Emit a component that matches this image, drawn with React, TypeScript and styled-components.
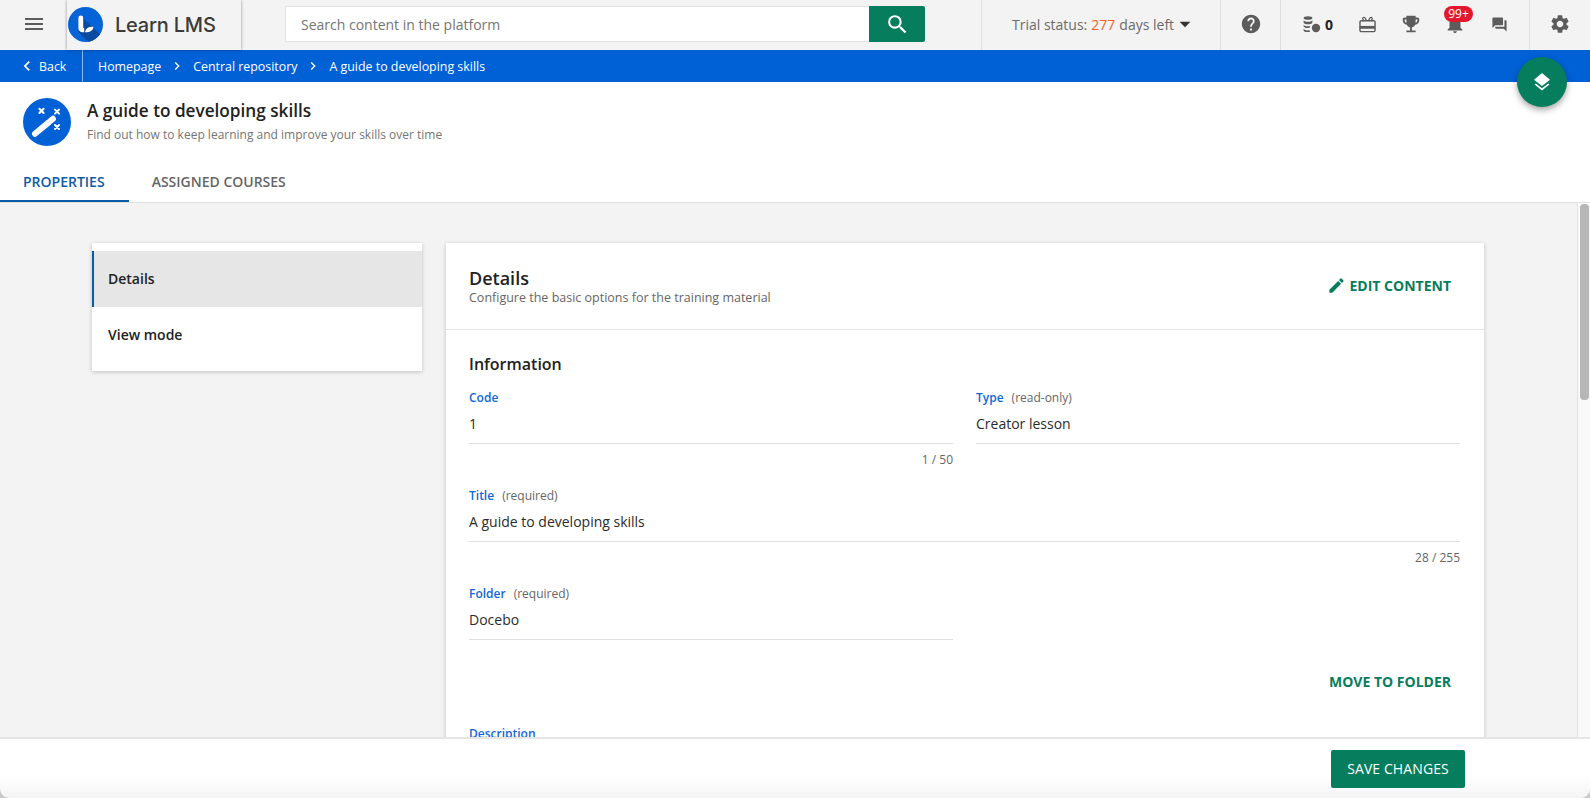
import React from "react";
import styled, { createGlobalStyle } from "styled-components";
import {
  MdMenu,
  MdSearch,
  MdHelp,
  MdEmojiEvents,
  MdNotifications,
  MdForum,
  MdSettings,
  MdEdit,
  MdChevronLeft,
  MdChevronRight,
  MdArrowDropDown,
} from "react-icons/md";

const GREEN = "#067d5d";
const BLUE = "#0060d6";
const DARK_BLUE = "#0a5ca8";
const ICON = "#5c5c5c";

const Global = createGlobalStyle`
  html, body { margin: 0; padding: 0; height: 100%; overflow: hidden; }
  #root { height: 100%; }
  * { box-sizing: border-box; }
  body { font-family: "Open Sans", "Liberation Sans", sans-serif; color: #222; background: #c9c9c9; }
`;

const Page = styled.div`
  position: relative;
  height: 798px;
  display: flex;
  flex-direction: column;
`;

const TopBar = styled.header`
  height: 50px;
  flex: none;
  display: flex;
  align-items: stretch;
  background: #f3f3f3;
`;

const MenuCell = styled.div`
  width: 67px;
  display: flex;
  align-items: center;
  justify-content: center;
  color: ${ICON};
  font-size: 24px;
  padding-bottom: 2px;
`;

const LogoBox = styled.div`
  width: 174px;
  display: flex;
  align-items: center;
  gap: 12px;
  padding: 0 0 1px 1px;
  position: relative;
  z-index: 3;
  background: #f3f3f3;
  box-shadow: 0 0 3px rgba(0, 0, 0, 0.4);
`;

const LogoWord = styled.span`
  font-family: Inter, "Open Sans", sans-serif;
  font-size: 20px;
  font-weight: 500;
  letter-spacing: -0.2px;
  color: #3b3b3b;
`;

const SearchForm = styled.div`
  margin: 6px 0 8px 44px;
  width: 640px;
  display: flex;
`;

const SearchField = styled.div`
  flex: 1;
  background: #fff;
  border: 1px solid #e2e2e2;
  border-right: 0;
  border-radius: 2px 0 0 2px;
  padding-left: 15px;
  display: flex;
  align-items: center;
  font-size: 14px;
  color: #757575;
`;

const SearchButton = styled.div`
  width: 56px;
  background: ${GREEN};
  border-radius: 0 2px 2px 0;
  color: #fff;
  display: flex;
  align-items: center;
  justify-content: center;
  font-size: 25px;
`;

const TopCell = styled.div<{ $w: number; $start?: number }>`
  width: ${(p) => p.$w}px;
  margin-left: ${(p) => p.$start ?? 0}px;
  border-left: 1px solid #e0e0e0;
  display: flex;
  align-items: center;
  color: ${ICON};
  flex: none;
`;

const TrialCell = styled(TopCell)`
  padding-left: 30px;
  font-size: 14px;
  color: #6b6b6b;
  padding-bottom: 2px;
`;

const Orange = styled.span`
  color: #f0622c;
  margin: 0 4px;
`;

const Caret = styled.span`
  color: #333;
  display: flex;
  font-size: 26px;
  margin-left: -2px;
`;

const IconCell = styled.div<{ $w?: number; $size?: number }>`
  position: relative;
  width: ${(p) => p.$w ?? 44}px;
  height: 100%;
  flex: none;
  display: flex;
  align-items: center;
  justify-content: center;
  font-size: ${(p) => p.$size ?? 22}px;
  color: ${ICON};
  padding-bottom: 2px;
`;

const CoinCell = styled(IconCell)`
  justify-content: flex-start;
  padding-left: 22px;
  gap: 4px;
`;

const CoinCount = styled.span`
  font-size: 14px;
  font-weight: 700;
  color: #222;
`;

const Badge = styled.span`
  position: absolute;
  left: 11px;
  top: 6px;
  width: 29px;
  height: 16px;
  border-radius: 8px;
  background: #e4182c;
  color: #fff;
  font-size: 12px;
  line-height: 16px;
  text-align: center;
`;

const CrumbBar = styled.nav`
  height: 32px;
  flex: none;
  display: flex;
  align-items: center;
  background: ${BLUE};
  color: #fff;
  font-size: 12.4px;
`;

const BackLink = styled.div`
  width: 83px;
  height: 100%;
  padding-left: 17px;
  border-right: 1px solid rgba(255, 255, 255, 0.55);
  display: flex;
  align-items: center;
  gap: 2px;
`;

const CrumbIcon = styled.span<{ $size: number }>`
  display: flex;
  font-size: ${(p) => p.$size}px;
`;

const Crumbs = styled.div`
  display: flex;
  align-items: center;
  padding-left: 15px;
  gap: 8px;
`;

const PageHead = styled.div`
  height: 70px;
  flex: none;
  background: #fff;
  padding: 16px 0 0 23px;
  display: flex;
  gap: 16px;
`;

const HeadText = styled.div`
  display: flex;
  flex-direction: column;
`;

const PageTitle = styled.h1`
  margin: 1px 0 1px;
  font-size: 17.2px;
  line-height: 24px;
  font-weight: 600;
  color: #222;
`;

const PageSub = styled.p`
  margin: 0;
  font-size: 12px;
  line-height: 22px;
  color: #757575;
`;

const Tabs = styled.div`
  height: 51px;
  flex: none;
  background: #fff;
  display: flex;
  border-bottom: 1px solid #e0e0e0;
`;

const Tab = styled.div<{ $active?: boolean }>`
  height: 50px;
  padding: 10px 24px 0 23px;
  display: flex;
  align-items: center;
  font-size: 14px;
  font-weight: 600;
  color: ${(p) => (p.$active ? DARK_BLUE : "#666")};
  border-bottom: 2px solid ${(p) => (p.$active ? DARK_BLUE : "transparent")};
`;

const Body = styled.div`
  flex: 1;
  min-height: 0;
  display: flex;
  background: #f3f3f3;
`;

const Scroller = styled.main`
  flex: 1;
  min-width: 0;
  overflow: hidden;
  padding: 40px 93px 0 92px;
  display: flex;
  align-items: flex-start;
  gap: 24px;
`;

const ScrollTrack = styled.div`
  width: 13px;
  flex: none;
  background: #f9f9f9;
  border-left: 1px solid #e4e4e4;
  padding: 1px 1px 0 2px;
`;

const ScrollThumb = styled.div`
  height: 196px;
  border-radius: 4px;
  background: #b6b6b6;
`;

const SideMenu = styled.aside`
  width: 330px;
  flex: none;
  padding: 8px 0;
  background: #fff;
  box-shadow: 0 1px 4px rgba(0, 0, 0, 0.22);
`;

const SideItem = styled.div<{ $active?: boolean }>`
  height: 56px;
  display: flex;
  align-items: center;
  padding: 0 0 1px ${(p) => (p.$active ? 14 : 16)}px;
  font-size: 14px;
  font-weight: 600;
  color: #222;
  background: ${(p) => (p.$active ? "#e6e6e6" : "#fff")};
  border-left: ${(p) => (p.$active ? `2px solid ${DARK_BLUE}` : "0")};
`;

const Card = styled.section`
  flex: 1;
  min-width: 0;
  background: #fff;
  box-shadow: 0 1px 4px rgba(0, 0, 0, 0.22);
`;

const CardHead = styled.div`
  height: 87px;
  padding: 23px 33px 0 23px;
  display: flex;
  justify-content: space-between;
  border-bottom: 1px solid #e2e2e2;
`;

const CardTitle = styled.h2`
  margin: 0;
  font-size: 18px;
  line-height: 24px;
  font-weight: 600;
  color: #222;
`;

const CardSub = styled.p`
  margin: 0;
  font-size: 12.5px;
  line-height: 15px;
  color: #666;
`;

const ActionLink = styled.div`
  display: flex;
  align-items: center;
  gap: 4px;
  font-size: 14px;
  font-weight: 700;
  color: ${GREEN};
`;

const EditAction = styled(ActionLink)`
  height: 40px;
  align-self: flex-start;
  margin-top: -1px;
`;

const EditIcon = styled.span`
  display: flex;
  font-size: 19px;
`;

const CardBody = styled.div`
  padding: 22px 24px 0 23px;
`;

const SectionTitle = styled.h3`
  margin: 0 0 13px;
  font-size: 16px;
  line-height: 24px;
  font-weight: 600;
  color: #222;
`;

const FieldGrid = styled.div`
  display: grid;
  grid-template-columns: 484px 484px;
  column-gap: 23px;
`;

const FieldWrap = styled.div<{ $wide?: boolean; $last?: boolean }>`
  grid-column: ${(p) => (p.$wide ? "1 / -1" : "auto")};
  height: ${(p) => (p.$last ? 55 : 98)}px;
`;

const Label = styled.div`
  font-size: 12px;
  line-height: 18px;
  font-weight: 600;
  color: #1068d8;
`;

const Hint = styled.span`
  margin-left: 8px;
  font-weight: 400;
  color: #666;
  font-size: 12px;
`;

const Value = styled.div`
  height: 37px;
  padding-top: 7px;
  font-size: 14px;
  line-height: 20px;
  color: #2b2b2b;
  border-bottom: 1px solid #e0e0e0;
`;

const Counter = styled.div`
  margin-top: 7px;
  text-align: right;
  font-size: 12px;
  line-height: 18px;
  color: #666;
`;

const MoveRow = styled.div`
  display: flex;
  justify-content: flex-end;
  padding: 0 9px 2px 0;
  height: 85px;
  align-items: center;
`;

const Footer = styled.footer`
  height: 61px;
  flex: none;
  position: relative;
  z-index: 2;
  border-top: 2px solid #e5e5e5;
  border-radius: 0 0 9px 9px;
  background: linear-gradient(to bottom, #fff 0, #fff 38px, #f4f4f4 100%);
  display: flex;
  justify-content: flex-end;
  padding: 11px 125px 0 0;
`;

const SaveButton = styled.button`
  width: 134px;
  height: 38px;
  border: 0;
  border-radius: 2px;
  padding: 0 0 2px;
  background: ${GREEN};
  color: #fff;
  font: 500 14px "Open Sans", sans-serif;
  letter-spacing: 0.1px;
`;

const Fab = styled.div`
  position: absolute;
  left: 1517px;
  top: 57px;
  z-index: 4;
  width: 50px;
  height: 50px;
  border-radius: 50%;
  background: ${GREEN};
  box-shadow: 0 3px 6px rgba(0, 0, 0, 0.35);
  display: flex;
  align-items: center;
  justify-content: center;
`;

const LogoMark = () => (
  <svg width="35" height="35" viewBox="0 0 35 35" aria-hidden="true">
    <defs>
      <clipPath id="logoClip">
        <circle cx="17.5" cy="17.5" r="17.5" />
      </clipPath>
    </defs>
    <circle cx="17.5" cy="17.5" r="17.5" fill="#0563d8" />
    <g clipPath="url(#logoClip)">
      <path d="M15 11 L36 31 L36 36 L22 36 L10 25 Z" fill="#0a4a9f" />
    </g>
    <path d="M10.4 11 a2.4 2.4 0 0 1 4.8 0 V20 a1.5 1.5 0 0 0 1 1.4 V25.3 H14.6 A4.2 4.2 0 0 1 10.4 21 Z" fill="#fff" />
    <path d="M17.2 25.3 C17.2 21.8 20 19.8 25.4 19.8 C25.4 23.4 22.4 25.3 17.2 25.3 Z" fill="#fff" />
  </svg>
);

const WandBadge = () => (
  <svg width="48" height="48" viewBox="0 0 48 48" style={{ flex: "none" }} aria-hidden="true">
    <circle cx="24" cy="24" r="24" fill={BLUE} />
    <g stroke="#fff" strokeWidth="2" strokeLinecap="round">
      <path d="M16.4 10.8 L20.6 15 M20.6 10.8 L16.4 15" />
      <path d="M32 11.6 L36 15.6 M36 11.6 L32 15.6" />
      <path d="M32 27 L36 31 M36 27 L32 31" />
    </g>
    <path d="M12 35.8 L25.4 24.6" stroke="#fff" strokeWidth="6" strokeLinecap="round" />
    <path d="M27.6 22.8 L30 20.8" stroke="#fff" strokeWidth="6" strokeLinecap="round" />
  </svg>
);

const CoinsIcon = () => (
  <svg width="18" height="17" viewBox="0 0 18 17" fill={ICON} aria-hidden="true">
    <ellipse cx="5" cy="2" rx="4.4" ry="1.8" />
    <path d="M.6 4c0 1 2 1.8 4.4 1.8S9.4 5 9.4 4v2.4C9.4 7.4 7.4 8.2 5 8.2S.6 7.4.6 6.4z" />
    <path d="M.6 8.4c0 1 2 1.8 4.4 1.8.9 0 1.8-.1 2.5-.3-.4.5-.7 1.1-.8 1.9-.5.1-1.1.2-1.7.2-2.4 0-4.4-.8-4.4-1.8z" />
    <path d="M.6 12.6c0 1 2 1.8 4.4 1.8.5 0 1 0 1.5-.1.1.6.3 1.1.6 1.6-.7.1-1.4.2-2.1.2-2.4 0-4.4-.5-4.4-1.5z" />
    <circle cx="13" cy="12" r="4.2" />
  </svg>
);

const GiftIcon = () => (
  <svg width="17" height="17" viewBox="0 0 18 17" aria-hidden="true">
    <rect x="1" y="4.6" width="16" height="11.4" rx="1.4" fill="none" stroke={ICON} strokeWidth="1.5" />
    <rect x="1" y="10" width="16" height="3" fill={ICON} />
    <path d="M5.2 5 L4 2.6 Q3.8 1 5.2 1 Q6.2 1 6.8 2.2 L8 4.6 M12.8 5 L14 2.6 Q14.2 1 12.8 1 Q11.8 1 11.2 2.2 L10 4.6" fill="none" stroke={ICON} strokeWidth="1.4" />
  </svg>
);

const LayersIcon = () => (
  <svg width="20" height="20" viewBox="0 0 20 20" fill="#fff" aria-hidden="true">
    <path d="M10 1 L18 7.8 L10 14 L2 7.8 Z" />
    <path d="M2.6 12.4 L3.8 11.4 L10 16.2 L16.2 11.4 L17.4 12.4 L10 18.6 Z" />
  </svg>
);

const Field = ({
  label,
  hint,
  value,
  count,
  wide,
  last,
}: {
  label: string;
  hint?: string;
  value: string;
  count?: string;
  wide?: boolean;
  last?: boolean;
}) => (
  <FieldWrap $wide={wide} $last={last}>
    <Label>
      {label}
      {hint && <Hint>{hint}</Hint>}
    </Label>
    <Value>{value}</Value>
    {count && <Counter>{count}</Counter>}
  </FieldWrap>
);

export default function App() {
  return (
    <Page>
      <Global />
      <TopBar>
        <MenuCell>
          <MdMenu />
        </MenuCell>
        <LogoBox>
          <LogoMark />
          <LogoWord>Learn LMS</LogoWord>
        </LogoBox>
        <SearchForm>
          <SearchField>Search content in the platform</SearchField>
          <SearchButton>
            <MdSearch />
          </SearchButton>
        </SearchForm>
        <TrialCell $w={239} $start={56}>
          Trial status:<Orange>277</Orange>days left
          <Caret>
            <MdArrowDropDown />
          </Caret>
        </TrialCell>
        <TopCell $w={60}>
          <IconCell $w={60}>
            <MdHelp />
          </IconCell>
        </TopCell>
        <TopCell $w={249}>
          <CoinCell $w={64}>
            <CoinsIcon />
            <CoinCount>0</CoinCount>
          </CoinCell>
          <IconCell>
            <GiftIcon />
          </IconCell>
          <IconCell>
            <MdEmojiEvents />
          </IconCell>
          <IconCell>
            <MdNotifications />
            <Badge>99+</Badge>
          </IconCell>
          <IconCell $size={17}>
            <MdForum />
          </IconCell>
        </TopCell>
        <TopCell $w={61}>
          <IconCell $w={60}>
            <MdSettings />
          </IconCell>
        </TopCell>
      </TopBar>

      <CrumbBar>
        <BackLink>
          <CrumbIcon $size={20}>
            <MdChevronLeft />
          </CrumbIcon>
          Back
        </BackLink>
        <Crumbs>
          <span>Homepage</span>
          <CrumbIcon $size={16}>
            <MdChevronRight />
          </CrumbIcon>
          <span>Central repository</span>
          <CrumbIcon $size={16}>
            <MdChevronRight />
          </CrumbIcon>
          <span>A guide to developing skills</span>
        </Crumbs>
      </CrumbBar>

      <PageHead>
        <WandBadge />
        <HeadText>
          <PageTitle>A guide to developing skills</PageTitle>
          <PageSub>Find out how to keep learning and improve your skills over time</PageSub>
        </HeadText>
      </PageHead>

      <Tabs>
        <Tab $active>PROPERTIES</Tab>
        <Tab>ASSIGNED COURSES</Tab>
      </Tabs>

      <Body>
        <Scroller>
          <SideMenu>
            <SideItem $active>Details</SideItem>
            <SideItem>View mode</SideItem>
          </SideMenu>
          <Card>
            <CardHead>
              <div>
                <CardTitle>Details</CardTitle>
                <CardSub>Configure the basic options for the training material</CardSub>
              </div>
              <EditAction>
                <EditIcon>
                  <MdEdit />
                </EditIcon>
                EDIT CONTENT
              </EditAction>
            </CardHead>
            <CardBody>
              <SectionTitle>Information</SectionTitle>
              <FieldGrid>
                <Field label="Code" value="1" count="1 / 50" />
                <Field label="Type" hint="(read-only)" value="Creator lesson" />
                <Field wide label="Title" hint="(required)" value="A guide to developing skills" count="28 / 255" />
                <Field last label="Folder" hint="(required)" value="Docebo" />
              </FieldGrid>
              <MoveRow>
                <ActionLink>MOVE TO FOLDER</ActionLink>
              </MoveRow>
              <Label>Description</Label>
            </CardBody>
          </Card>
        </Scroller>
        <ScrollTrack>
          <ScrollThumb />
        </ScrollTrack>
      </Body>

      <Footer>
        <SaveButton>SAVE CHANGES</SaveButton>
      </Footer>

      <Fab>
        <LayersIcon />
      </Fab>
    </Page>
  );
}
